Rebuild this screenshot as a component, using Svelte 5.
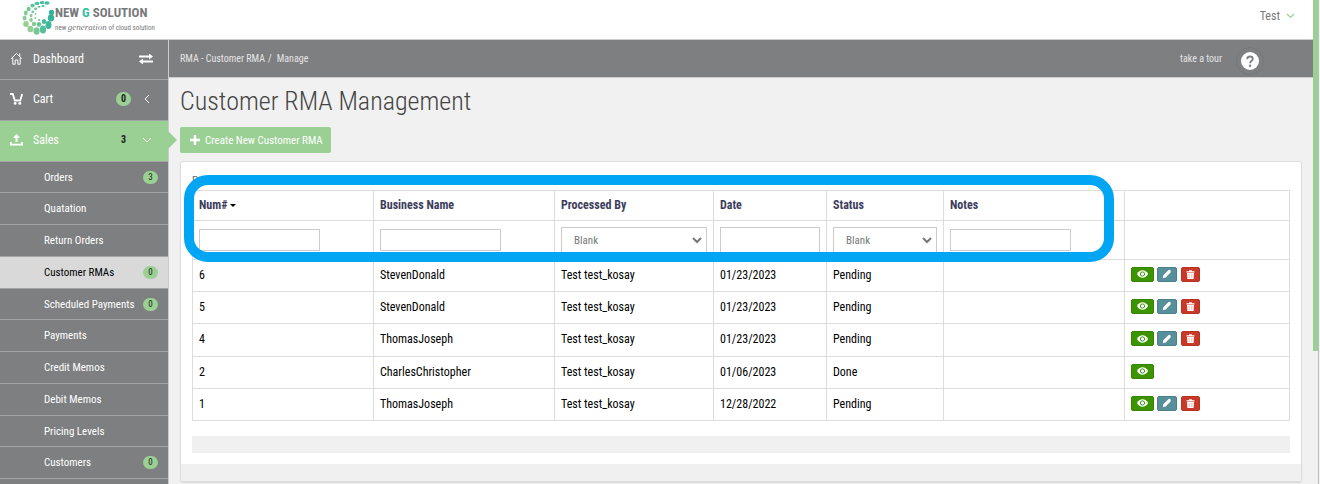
<script>
	const submenu = [
		{ label: 'Orders', count: 3 },
		{ label: 'Quatation' },
		{ label: 'Return Orders' },
		{ label: 'Customer RMAs', count: 0, active: true },
		{ label: 'Scheduled Payments', count: 0 },
		{ label: 'Payments' },
		{ label: 'Credit Memos' },
		{ label: 'Debit Memos' },
		{ label: 'Pricing Levels' },
		{ label: 'Customers', count: 0 }
	];

	const rows = [
		{ num: 6, business: 'StevenDonald', by: 'Test test_kosay', date: '01/23/2023', status: 'Pending' },
		{ num: 5, business: 'StevenDonald', by: 'Test test_kosay', date: '01/23/2023', status: 'Pending' },
		{ num: 4, business: 'ThomasJoseph', by: 'Test test_kosay', date: '01/23/2023', status: 'Pending' },
		{ num: 2, business: 'CharlesChristopher', by: 'Test test_kosay', date: '01/06/2023', status: 'Done' },
		{ num: 1, business: 'ThomasJoseph', by: 'Test test_kosay', date: '12/28/2022', status: 'Pending' }
	];

	// logo swirl: [cx, cy, rx, ry, fill]
	const dots = [
		[25, 3, 2.6, 1.7, '#43bfa0'],
		[20, 2.6, 2.4, 1.6, '#43bfa0'],
		[15, 3.4, 2.4, 1.7, '#4fbf9c'],
		[10.5, 5.6, 2.2, 1.9, '#5fc29a'],
		[6.6, 9, 2, 2.2, '#70c697'],
		[3.8, 13, 1.9, 2.4, '#80ca95'],
		[2.6, 18, 2, 2.6, '#8ccd93'],
		[4, 24, 2.8, 2.9, '#97d092'],
		[8.4, 29, 3, 3.3, '#93cf92'],
		[14.6, 31, 3.1, 3.8, '#74c796'],
		[21, 29.5, 3.1, 3.9, '#55bd97'],
		[26.5, 25, 3, 4, '#3fb79b'],
		[29, 18, 3.2, 3.4, '#35b39c'],
		[29.5, 12.5, 2.7, 2.7, '#35b39c'],
		[21, 6, 1.6, 1, '#57bf9b'],
		[17, 6.8, 1.5, 1, '#57bf9b'],
		[13.6, 8.8, 1.5, 1.2, '#66c399'],
		[10.8, 11.8, 1.4, 1.4, '#75c797'],
		[9, 15.6, 1.5, 1.7, '#84cb94'],
		[9, 20, 1.8, 2, '#8fcd93'],
		[12, 24, 2.2, 2.2, '#82ca94'],
		[17, 24.4, 2.2, 2.3, '#64c298'],
		[22, 21.6, 2.2, 2.5, '#46b99a'],
		[13.6, 14, 0.9, 1, '#84cb94'],
		[13.4, 18, 1, 1.1, '#84cb94'],
		[17, 20, 1.1, 1.1, '#64c298']
	];

	let openSales = $state(true);
</script>

<div class="page">
	<header class="topbar">
		<a class="logo" href="#home">
			<svg width="33" height="36" viewBox="0 0 33 36" aria-hidden="true">
				{#each dots as [cx, cy, rx, ry, fill]}
					<ellipse {cx} {cy} {rx} {ry} {fill} />
				{/each}
			</svg>
			<span class="logo-text">
				<b>NEW <em>G</em> SOLUTION</b>
				<small>new <i>generation</i> of cloud solution</small>
			</span>
		</a>
		<button class="user" type="button">
			Test
			<svg width="9" height="6" viewBox="0 0 9 6"><path d="M1 1l3.5 3.5L8 1" fill="none" stroke="#9ad094" stroke-width="1.2" /></svg>
		</button>
	</header>

	<div class="body">
		<nav class="sidebar">
			<div class="item">
				<svg class="icon" width="12" height="13" viewBox="0 0 12 13">
					<path d="M.7 6.6L6 1.4l5.3 5.2M2.3 5.8v6.4h2.4V8h2.6v4.2h2.4V5.8M9.3 1.5v2.4" fill="none" stroke="#fff" />
				</svg>
				<a href="#dashboard">Dashboard</a>
				<button class="swap" type="button" aria-label="Collapse menu">
					<svg width="14" height="10" viewBox="0 0 14 10">
						<path d="M0 1.500h10V-.5l4 3-4 3v-2H0zM14 8.500H4v2l-4-3 4-3v2h10z" fill="#fff" />
					</svg>
				</button>
			</div>
			<div class="item">
				<svg class="icon" width="13" height="12" viewBox="0 0 13 12">
					<path d="M0 1h2.8l2 6.500h5.400L12.200 1" fill="none" stroke="#fff" stroke-width="1.800" />
					<circle cx="5.200" cy="10.400" r="1.400" fill="#fff" />
					<circle cx="9.800" cy="10.400" r="1.400" fill="#fff" />
				</svg>
				<a href="#cart">Cart</a>
				<span class="badge">0</span>
				<svg class="caret" width="10" height="10" viewBox="0 0 10 10"><path d="M7 1L3 5l4 4" fill="none" stroke="#fff" /></svg>
			</div>
			<div class="item open">
				<svg class="icon" width="13" height="12" viewBox="0 0 13 12">
					<path d="M6.500 0l3.500 4H7.500v4h-2V4H3zM0 8h1.800v1.800h9.400V8H13v3.500H0z" fill="#fff" />
				</svg>
				<a href="#sales" onclick={() => (openSales = !openSales)}>Sales</a>
				<span class="badge">3</span>
				<svg class="caret" width="10" height="10" viewBox="0 0 10 10"><path d="M1 3l4 4 4-4" fill="none" stroke="#fff" /></svg>
			</div>
			{#if openSales}
				<ul class="submenu">
					{#each submenu as item}
						<li class:active={item.active}>
							<a href="#sub">{item.label}</a>
							{#if item.count !== undefined}
								<span class="badge small">{item.count}</span>
							{/if}
						</li>
					{/each}
				</ul>
			{/if}
		</nav>

		<main>
			<div class="crumbs">
				<a href="#rma">RMA - Customer RMA</a>
				<span class="slash">/</span>
				<span>Manage</span>
				<a class="tour" href="#tour">take a tour</a>
				<button class="help" type="button" aria-label="Help">
					<svg width="28" height="28" viewBox="0 0 28 28">
						<circle cx="14" cy="14" r="13.500" fill="none" stroke="#77787a" />
						<circle cx="14" cy="14" r="9" fill="#fff" />
						<path d="M11.200 12.200c0-1.700 1.200-2.700 2.800-2.700s2.800 1 2.800 2.500c0 2-2.800 2.100-2.800 4.200" fill="none" stroke="#7e7f81" stroke-width="1.800" />
						<circle cx="14" cy="18.700" r="1.200" fill="#7e7f81" />
					</svg>
				</button>
			</div>

			<div class="content">
				<h1>Customer RMA Management</h1>
				<button class="create" type="button">
					<svg width="10" height="10" viewBox="0 0 10 10"><path d="M5 0v10M0 5h10" stroke="#fff" stroke-width="2.400" /></svg>
					Create New Customer RMA
				</button>

				<section class="card">
					<div class="grid-view">
						<div class="summary">Print</div>
						<table>
							<colgroup>
								<col class="c-wide" />
								<col class="c-wide" />
								<col class="c-by" />
								<col class="c-date" />
								<col class="c-status" />
								<col class="c-wide" />
								<col />
							</colgroup>
							<thead>
								<tr class="titles">
									<th>Num# <span class="sort"></span></th>
									<th>Business Name</th>
									<th>Processed By</th>
									<th>Date</th>
									<th>Status</th>
									<th>Notes</th>
									<th></th>
								</tr>
								<tr class="filters">
									<td><input type="text" aria-label="Num#" /></td>
									<td><input type="text" aria-label="Business Name" /></td>
									<td>
										<div class="select">
											<select aria-label="Processed By"><option>Blank</option></select>
											<svg width="10" height="7" viewBox="0 0 10 7"><path d="M1 1l4 4 4-4" fill="none" stroke="#777" stroke-width="2" /></svg>
										</div>
									</td>
									<td><input class="tall" type="text" aria-label="Date" /></td>
									<td>
										<div class="select">
											<select aria-label="Status"><option>Blank</option></select>
											<svg width="10" height="7" viewBox="0 0 10 7"><path d="M1 1l4 4 4-4" fill="none" stroke="#777" stroke-width="2" /></svg>
										</div>
									</td>
									<td><input type="text" aria-label="Notes" /></td>
									<td></td>
								</tr>
							</thead>
							<tbody>
								{#each rows as row}
									<tr>
										<td>{row.num}</td>
										<td>{row.business}</td>
										<td>{row.by}</td>
										<td>{row.date}</td>
										<td>{row.status}</td>
										<td></td>
										<td>
											<div class="actions">
												<button class="view" type="button" aria-label="View">
													<svg width="11" height="8" viewBox="0 0 11 8">
														<path d="M0 4C1.300 1.500 3.200.3 5.500.3S9.700 1.500 11 4C9.700 6.500 7.800 7.700 5.500 7.700S1.300 6.500 0 4z" fill="#fff" />
														<circle cx="5.500" cy="4" r="2.100" fill="none" stroke="#3c9400" />
													</svg>
												</button>
												{#if row.status !== 'Done'}
													<button class="edit" type="button" aria-label="Edit">
														<svg width="10" height="10" viewBox="0 0 10 10">
															<path d="M.8 9.200l.5-3L6.300 1.200q1-.8 2 .1t.3 2.200L3.700 8.600z" fill="#fff" />
														</svg>
													</button>
													<button class="delete" type="button" aria-label="Delete">
														<svg width="9" height="9" viewBox="0 0 9 9">
															<path d="M.5 1.200h2.300L3.300.2h2.400l.5 1h2.300v1.200h-8zM1 3h7l-.4 6H1.400z" fill="#fff" />
															<path d="M3.200 4v4M5.800 4v4" stroke="#e9a8a1" stroke-width=".8" />
														</svg>
													</button>
												{/if}
											</div>
										</td>
									</tr>
								{/each}
							</tbody>
						</table>
						<div class="highlight"></div>
					</div>
					<div class="pager"></div>
					<footer></footer>
				</section>
			</div>
		</main>
	</div>
	<div class="scroll-thumb"></div>
</div>

<style>
:global(body) {
  background: #f1f1f1;
  overflow: hidden;
}
* {
  box-sizing: border-box;
}
.page {
  position: relative;
  height: 100vh;
  overflow: hidden;
  padding-right: 7px;
  font-family: "Roboto Condensed", Roboto, sans-serif;
  font-size: 12px;
  color: #000;
}
.page::after {
  content: "";
  position: absolute;
  top: 0;
  right: 1px;
  width: 1px;
  height: 100%;
  background: #bdbdbd;
}
.scroll-thumb {
  position: absolute;
  top: 0;
  right: 2px;
  width: 5px;
  height: 351px;
  background: #9ad094;
}
a {
  color: inherit;
  text-decoration: none;
}
button {
  border: none;
  background: none;
  padding: 0;
  font-family: inherit;
  cursor: pointer;
}
svg {
  display: block;
  flex: none;
}

.topbar {
  display: flex;
  justify-content: space-between;
  height: 40px;
  padding: 0 18px 0 22px;
  border-bottom: 1px solid #ccc;
  background: #fff;
}
.logo {
  display: flex;
}
.logo-text {
  padding-top: 5px;
  color: #77787b;
  white-space: nowrap;
}
.logo b {
  display: block;
  font-size: 13px;
  line-height: 15px;
}
.logo em {
  font-style: normal;
  color: #2fbf9c;
}
.logo small {
  display: block;
  font-size: 7px;
  line-height: 14px;
}
.logo i {
  font-family: "Liberation Serif", serif;
  font-size: 9px;
}
.user {
  display: flex;
  align-items: center;
  gap: 6px;
  height: 31px;
  font-size: 12px;
  color: #77787b;
}

.body {
  display: flex;
}
.sidebar {
  flex: none;
  width: 169px;
  min-height: 100vh;
  border-right: 1px solid #ccc;
  background: #7e7f81;
  color: #fff;
}
.item {
  position: relative;
  display: flex;
  align-items: center;
  height: 41px;
  padding: 0 16px 2px 10px;
  border-bottom: 1px solid #a2a3a5;
}
.item:first-child {
  height: 40px;
}
.item a {
  flex: 1;
}
.icon {
  width: 13px;
  margin-right: 10px;
}
.swap {
  margin-right: -1px;
}
.open {
  background: #9ad094;
}
.open::after {
  content: "";
  position: absolute;
  top: 10px;
  left: 168px;
  border: 9px solid transparent;
  border-left-color: #9ad094;
  border-right: none;
}
.badge {
  width: 15px;
  border-radius: 7px;
  background: #9ad094;
  color: #222;
  font-size: 10px;
  font-weight: 700;
  line-height: 14px;
  text-align: center;
}
.caret {
  margin-left: 11px;
}
.submenu {
  margin: 0;
  padding: 0;
  list-style: none;
}
.submenu li {
  display: flex;
  justify-content: space-between;
  align-items: center;
  height: 32px;
  padding: 0 10px 0 44px;
  border-bottom: 1px solid #a2a3a5;
  font-size: 11px;
}
.submenu li:nth-child(4n + 1) {
  height: 31px;
}
.submenu .active {
  background: #d9d9d9;
  color: #000;
}
.small {
  font-size: 9px;
  font-weight: 400;
  line-height: 13px;
}

main {
  flex: 1;
  min-width: 0;
}
.crumbs {
  display: flex;
  align-items: center;
  height: 38px;
  padding: 0 49px 0 11px;
  border-bottom: 1px solid #ccc;
  background: #7e7f81;
  color: #e4e4e4;
  font-size: 10px;
}
.slash {
  margin: 0 5px 0 3px;
}
.tour {
  margin-left: auto;
}
.help {
  margin: 4px 0 0 14px;
}
.content {
  padding: 0 11px;
}
h1 {
  margin: 0;
  padding-top: 5px;
  font-size: 26px;
  font-weight: 300;
  line-height: 36px;
  color: #444;
}
.create {
  display: flex;
  align-items: center;
  gap: 5px;
  height: 26px;
  margin: 8px 0;
  padding: 0 8px 0 10px;
  border-radius: 2px;
  background: #9ad094;
  color: #fff;
  font-size: 11px;
}
.card {
  border: 1px solid #ddd;
  border-radius: 3px;
  background: #fff;
  box-shadow: 0 1px 1px rgba(0, 0, 0, 0.1);
}
.grid-view {
  position: relative;
  padding: 12px 11px 0;
}
.summary {
  margin-bottom: 2px;
  font-size: 11px;
  line-height: 14px;
  color: #666;
}
.highlight {
  position: absolute;
  top: 13px;
  left: 3px;
  right: 187px;
  height: 87px;
  border: 10px solid #00a6f4;
  border-radius: 24px;
  pointer-events: none;
}
table {
  width: 100%;
  border-collapse: collapse;
  table-layout: fixed;
}
.c-wide {
  width: 181px;
}
.c-by {
  width: 159px;
}
.c-date {
  width: 113px;
}
.c-status {
  width: 117px;
}
th,
td {
  height: 32px;
  padding: 0 6px 2px;
  border: 1px solid #ddd;
  text-align: left;
}
tbody tr:nth-child(3) td {
  height: 33px;
}
.titles th {
  height: 30px;
  color: #3d3d5c;
}
.filters td {
  height: 39px;
  padding-bottom: 0;
}
.sort {
  display: inline-block;
  border: 3px solid transparent;
  border-top-color: #000;
  border-bottom: none;
  vertical-align: middle;
}
input {
  display: block;
  width: 121px;
  height: 22px;
  border: 1px solid #ccc;
  background: #fff;
}
.tall {
  width: 100%;
  height: 27px;
}
.select {
  position: relative;
}
.select svg {
  position: absolute;
  top: 10px;
  right: 5px;
  pointer-events: none;
}
select {
  display: block;
  appearance: none;
  width: 100%;
  height: 27px;
  padding: 0 12px;
  border: 1px solid #ccc;
  border-radius: 0;
  background: #fff;
  color: #777;
  font-family: inherit;
  font-size: 11px;
}
.actions {
  display: flex;
  gap: 3px;
}
.actions button {
  display: flex;
  align-items: center;
  justify-content: center;
  height: 15px;
  margin-bottom: 1px;
  border: 1px solid;
  border-radius: 2px;
}
.actions .view {
  width: 23px;
  border-color: #358300;
  background: #3c9400;
}
.actions .edit {
  width: 20px;
  border-color: #4c8088;
  background: #57909a;
}
.actions .delete {
  width: 19px;
  margin-left: 1px;
  border-color: #b93324;
  background: #c9392a;
}
.pager {
  height: 17px;
  margin: 15px 11px 11px;
  background: #f0f0f0;
}
footer {
  height: 17px;
  background: #f0f0f0;
}
</style>
